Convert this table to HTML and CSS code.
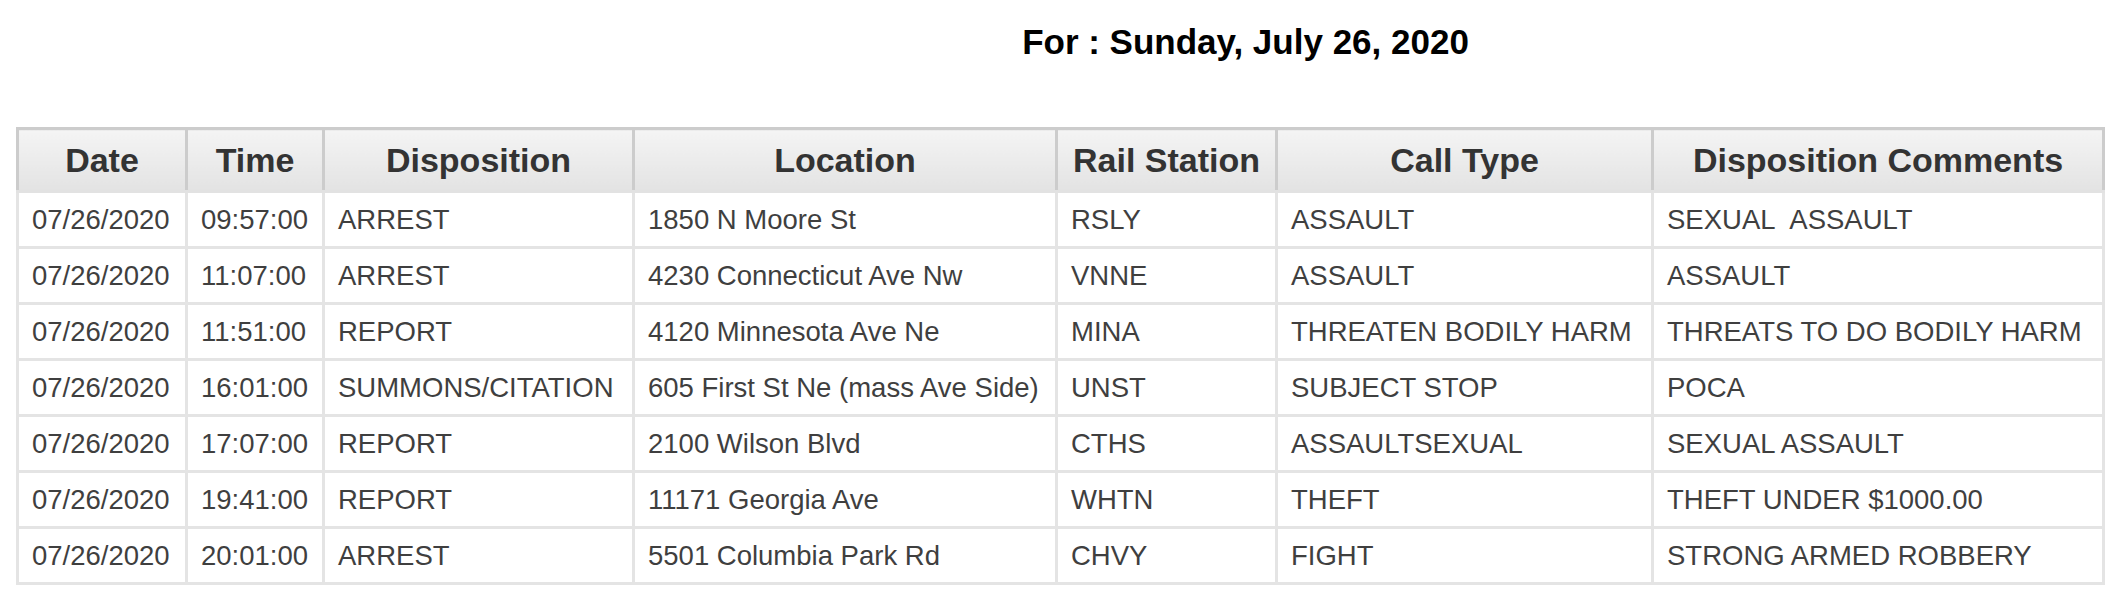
FILE: index.html
```html
<!DOCTYPE html>
<html lang="en">
<head>
<meta charset="utf-8">
<title>Incident Report</title>
<link rel="stylesheet" href="styles.css">
</head>
<body>
<div class="page">
  <h1 class="title">For : Sunday, July 26, 2020</h1>
  <div class="wrap">
    <table class="report">
      <colgroup>
        <col class="c-date"><col class="c-time"><col class="c-disp"><col class="c-loc"><col class="c-rail"><col class="c-call"><col class="c-comm">
      </colgroup>
      <thead>
        <tr><th>Date</th><th>Time</th><th>Disposition</th><th>Location</th><th>Rail Station</th><th>Call Type</th><th>Disposition Comments</th></tr>
      </thead>
      <tbody>
        <tr><td>07/26/2020</td><td>09:57:00</td><td>ARREST</td><td>1850 N Moore St</td><td>RSLY</td><td>ASSAULT</td><td>SEXUAL&nbsp; ASSAULT</td></tr>
        <tr><td>07/26/2020</td><td>11:07:00</td><td>ARREST</td><td>4230 Connecticut Ave Nw</td><td>VNNE</td><td>ASSAULT</td><td>ASSAULT</td></tr>
        <tr><td>07/26/2020</td><td>11:51:00</td><td>REPORT</td><td>4120 Minnesota Ave Ne</td><td>MINA</td><td>THREATEN BODILY HARM</td><td>THREATS TO DO BODILY HARM</td></tr>
        <tr><td>07/26/2020</td><td>16:01:00</td><td>SUMMONS/CITATION</td><td>605 First St Ne (mass Ave Side)</td><td>UNST</td><td>SUBJECT STOP</td><td>POCA</td></tr>
        <tr><td>07/26/2020</td><td>17:07:00</td><td>REPORT</td><td>2100 Wilson Blvd</td><td>CTHS</td><td>ASSAULTSEXUAL</td><td>SEXUAL ASSAULT</td></tr>
        <tr><td>07/26/2020</td><td>19:41:00</td><td>REPORT</td><td>11171 Georgia Ave</td><td>WHTN</td><td>THEFT</td><td>THEFT UNDER $1000.00</td></tr>
        <tr><td>07/26/2020</td><td>20:01:00</td><td>ARREST</td><td>5501 Columbia Park Rd</td><td>CHVY</td><td>FIGHT</td><td>STRONG ARMED ROBBERY</td></tr>
      </tbody>
    </table>
  </div>
</div>
</body>
</html>
```
FILE: styles.css
```css
html, body {
  margin: 0;
  padding: 0;
  background: #ffffff;
}

body {
  font-family: "Liberation Sans", Arial, Helvetica, sans-serif;
}

.page {
  width: 2118px;
}

.title {
  margin: 0;
  padding: 22px 0 0 373px;
  height: 40px;
  line-height: 40px;
  font-size: 35px;
  font-weight: bold;
  color: #000;
  text-align: center;
}

.wrap {
  padding: 65px 16px 0 16px;
}

.report {
  width: 2086px;
  table-layout: fixed;
  border-collapse: collapse;
  border-spacing: 0;
}

.c-date { width: 169px; }
.c-time { width: 137px; }
.c-disp { width: 310px; }
.c-loc  { width: 423px; }
.c-rail { width: 220px; }
.c-call { width: 376px; }
.c-comm { width: 451px; }

.report th {
  font-size: 34px;
  line-height: 39px;
  font-weight: bold;
  color: #333;
  text-align: center;
  padding: 10.5px 4px;
  background: linear-gradient(#f4f4f4, #e3e3e3);
  border: 3px solid #cccccc;
  border-bottom-color: #e2e2e2;
  white-space: nowrap;
}

.report td {
  font-size: 27.5px;
  line-height: 32px;
  color: #3f3f3f;
  text-align: left;
  padding: 11px 13px 10px;
  background: #fff;
  border: 3px solid #e4e4e4;
  white-space: nowrap;
}
```
